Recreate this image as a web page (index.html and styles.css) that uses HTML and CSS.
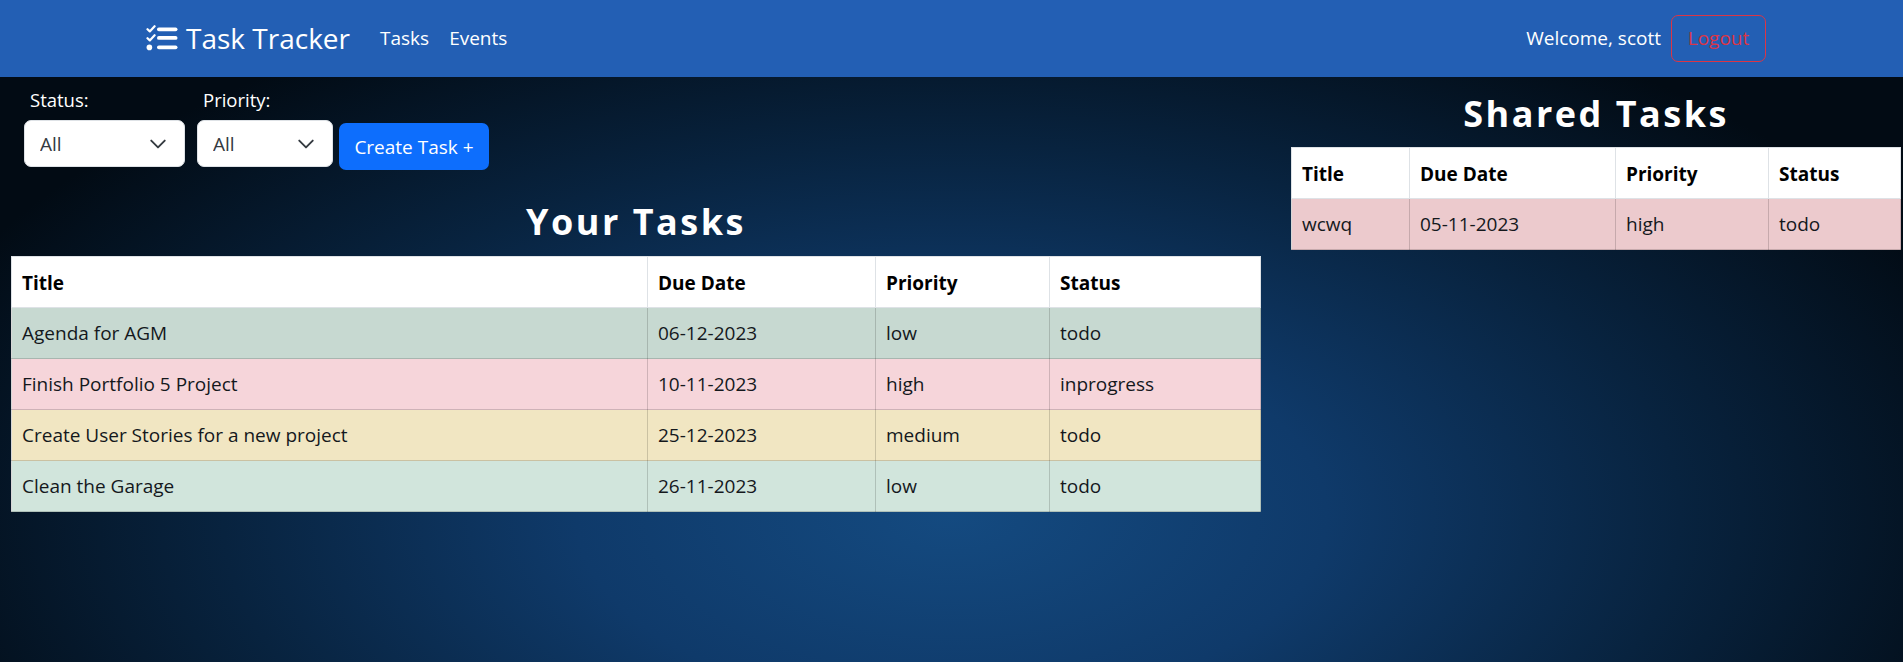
FILE: index.html
```html
<!DOCTYPE html>
<html lang="en">
<head>
    <meta charset="UTF-8">
    <meta name="viewport" content="width=device-width, initial-scale=1.0">
    <title>Task Tracker</title>
    <link rel="stylesheet" href="styles.css">
</head>
<body>
    <header class="navbar">
        <a class="brand" href="#">
            <svg class="brand-icon" viewBox="0 0 32 26" width="32" height="26" aria-hidden="true">
                <path class="brand-check" d="M1.5 4.2 L3.8 6.4 L8.6 1.2"/>
                <path class="brand-check" d="M1.5 13.2 L3.8 15.4 L8.6 10.2"/>
                <circle class="brand-dot" cx="3.4" cy="22.4" r="2.8"/>
                <rect class="brand-bar" x="11" y="2.4" width="20.5" height="3.8" rx="1.9"/>
                <rect class="brand-bar" x="11" y="11" width="20.5" height="3.8" rx="1.9"/>
                <rect class="brand-bar" x="11" y="20.4" width="20.5" height="3.8" rx="1.9"/>
            </svg>
            Task Tracker
        </a>
        <nav class="nav-links">
            <a href="#">Tasks</a>
            <a href="#">Events</a>
        </nav>
        <div class="nav-user">
            <span>Welcome, scott</span>
            <button class="btn-logout">Logout</button>
        </div>
    </header>

    <main class="content">
        <section class="col-tasks">
            <div class="filters">
                <div class="filter filter-status">
                    <label for="status">Status:</label>
                    <select id="status">
                        <option>All</option>
                    </select>
                </div>
                <div class="filter filter-priority">
                    <label for="priority">Priority:</label>
                    <select id="priority">
                        <option>All</option>
                    </select>
                </div>
                <button class="btn-create">Create Task +</button>
            </div>

            <h2>Your Tasks</h2>
            <table class="tasks own-tasks">
                <thead>
                    <tr><th>Title</th><th>Due Date</th><th>Priority</th><th>Status</th></tr>
                </thead>
                <tbody>
                    <tr class="row-green"><td>Agenda for AGM</td><td>06-12-2023</td><td>low</td><td>todo</td></tr>
                    <tr class="row-red"><td>Finish Portfolio 5 Project</td><td>10-11-2023</td><td>high</td><td>inprogress</td></tr>
                    <tr class="row-yellow"><td>Create User Stories for a new project</td><td>25-12-2023</td><td>medium</td><td>todo</td></tr>
                    <tr class="row-mint"><td>Clean the Garage</td><td>26-11-2023</td><td>low</td><td>todo</td></tr>
                </tbody>
            </table>
        </section>

        <section class="col-shared">
            <h2>Shared Tasks</h2>
            <table class="tasks shared-tasks">
                <thead>
                    <tr><th>Title</th><th>Due Date</th><th>Priority</th><th>Status</th></tr>
                </thead>
                <tbody>
                    <tr class="row-rose"><td>wcwq</td><td>05-11-2023</td><td>high</td><td>todo</td></tr>
                </tbody>
            </table>
        </section>
    </main>
</body>
</html>
```

FILE: styles.css
```css
* {
    box-sizing: border-box;
}
html, body {
    height: 100%;
}
body {
    margin: 0;
    font-family: "Open Sans", "Noto Sans", sans-serif;
    font-size: 19px;
    color: #212529;
    background: radial-gradient(ellipse 58% 85% at 50% 78%, #144a80 0%, #0f3a6a 34%, #08233f 66%, #020b14 100%);
    background-color: #020b14;
    overflow: hidden;
}
a {
    color: white;
    text-decoration: none;
}

/* navbar */
.navbar {
    display: flex;
    align-items: center;
    height: 77px;
    padding: 0 137px 1px 146px;
    background: #235fb4;
    color: white;
}
.brand {
    display: flex;
    align-items: center;
    gap: 8px;
    font-size: 28px;
}
.brand-icon {
    flex: none;
}
.brand-check {
    fill: none;
    stroke: white;
    stroke-width: 2.2;
    stroke-linecap: round;
    stroke-linejoin: round;
}
.brand-dot, .brand-bar {
    fill: white;
}
.nav-links {
    display: flex;
    gap: 20px;
    margin-left: 30px;
}
.nav-user {
    display: flex;
    align-items: center;
    gap: 10px;
    margin-left: auto;
}
.btn-logout {
    width: 95px;
    height: 47px;
    padding: 0;
    font: inherit;
    color: #dc3545;
    background: transparent;
    border: 1px solid #dc3545;
    border-radius: 7px;
}

/* page columns */
.content {
    display: grid;
    grid-template-columns: 1250px 1fr;
    gap: 30px;
    padding: 0 2px 0 11px;
}
h2 {
    height: 48px;
    margin: 0 0 9px 0;
    font-size: 36px;
    font-weight: 700;
    line-height: 48px;
    letter-spacing: 2.5px;
    text-align: center;
    color: white;
}
.col-tasks h2 {
    margin-bottom: 10px;
}
.col-shared {
    padding-top: 13px;
}

/* filters */
.filters {
    display: flex;
    align-items: flex-start;
    padding: 10px 0 0 13px;
    margin-bottom: 28px;
}
.filter label {
    display: block;
    height: 33px;
    padding-left: 6px;
    font-size: 18.5px;
    line-height: 26px;
    color: white;
}
.filter select {
    display: block;
    width: 100%;
    height: 47px;
    padding: 0 15px;
    font: inherit;
    color: #343a40;
    border: 1px solid #dee2e6;
    border-radius: 7px;
    appearance: none;
    background: white url("data:image/svg+xml,%3csvg xmlns='http://www.w3.org/2000/svg' viewBox='0 0 16 16'%3e%3cpath fill='none' stroke='%23343a40' stroke-linecap='round' stroke-linejoin='round' stroke-width='1.7' d='m2 5 6 6 6-6'/%3e%3c/svg%3e") no-repeat right 17px center / 18px 18px;
}
.filter-status {
    width: 161px;
    margin-right: 12px;
}
.filter-priority {
    width: 136px;
    margin-right: 6px;
}
.btn-create {
    width: 150px;
    height: 47px;
    margin-top: 36px;
    padding: 0;
    font: inherit;
    color: white;
    background: #0d6efd;
    border: none;
    border-radius: 7px;
}

/* tables */
.tasks {
    width: 100%;
    table-layout: fixed;
    border-collapse: collapse;
    background: white;
}
.tasks th, .tasks td {
    height: 51px;
    padding: 0 10px;
    text-align: left;
    color: #14181c;
    border: 1px solid rgba(0, 0, 0, 0.16);
}
.tasks th {
    padding-top: 1px;
    font-weight: 700;
    color: black;
    border-color: #dee2e6;
}
.own-tasks th:nth-child(1) { width: 636px; }
.own-tasks th:nth-child(2) { width: 228px; }
.own-tasks th:nth-child(3) { width: 174px; }
.shared-tasks th:nth-child(1) { width: 118px; }
.shared-tasks th:nth-child(2) { width: 206px; }
.shared-tasks th:nth-child(3) { width: 153px; }
.row-green td { background: #c7d9d1; }
.row-red td { background: #f6d5da; }
.row-yellow td { background: #f1e6c2; }
.row-mint td { background: #d1e5dc; }
.row-rose td { background: #eccacd; }
```
